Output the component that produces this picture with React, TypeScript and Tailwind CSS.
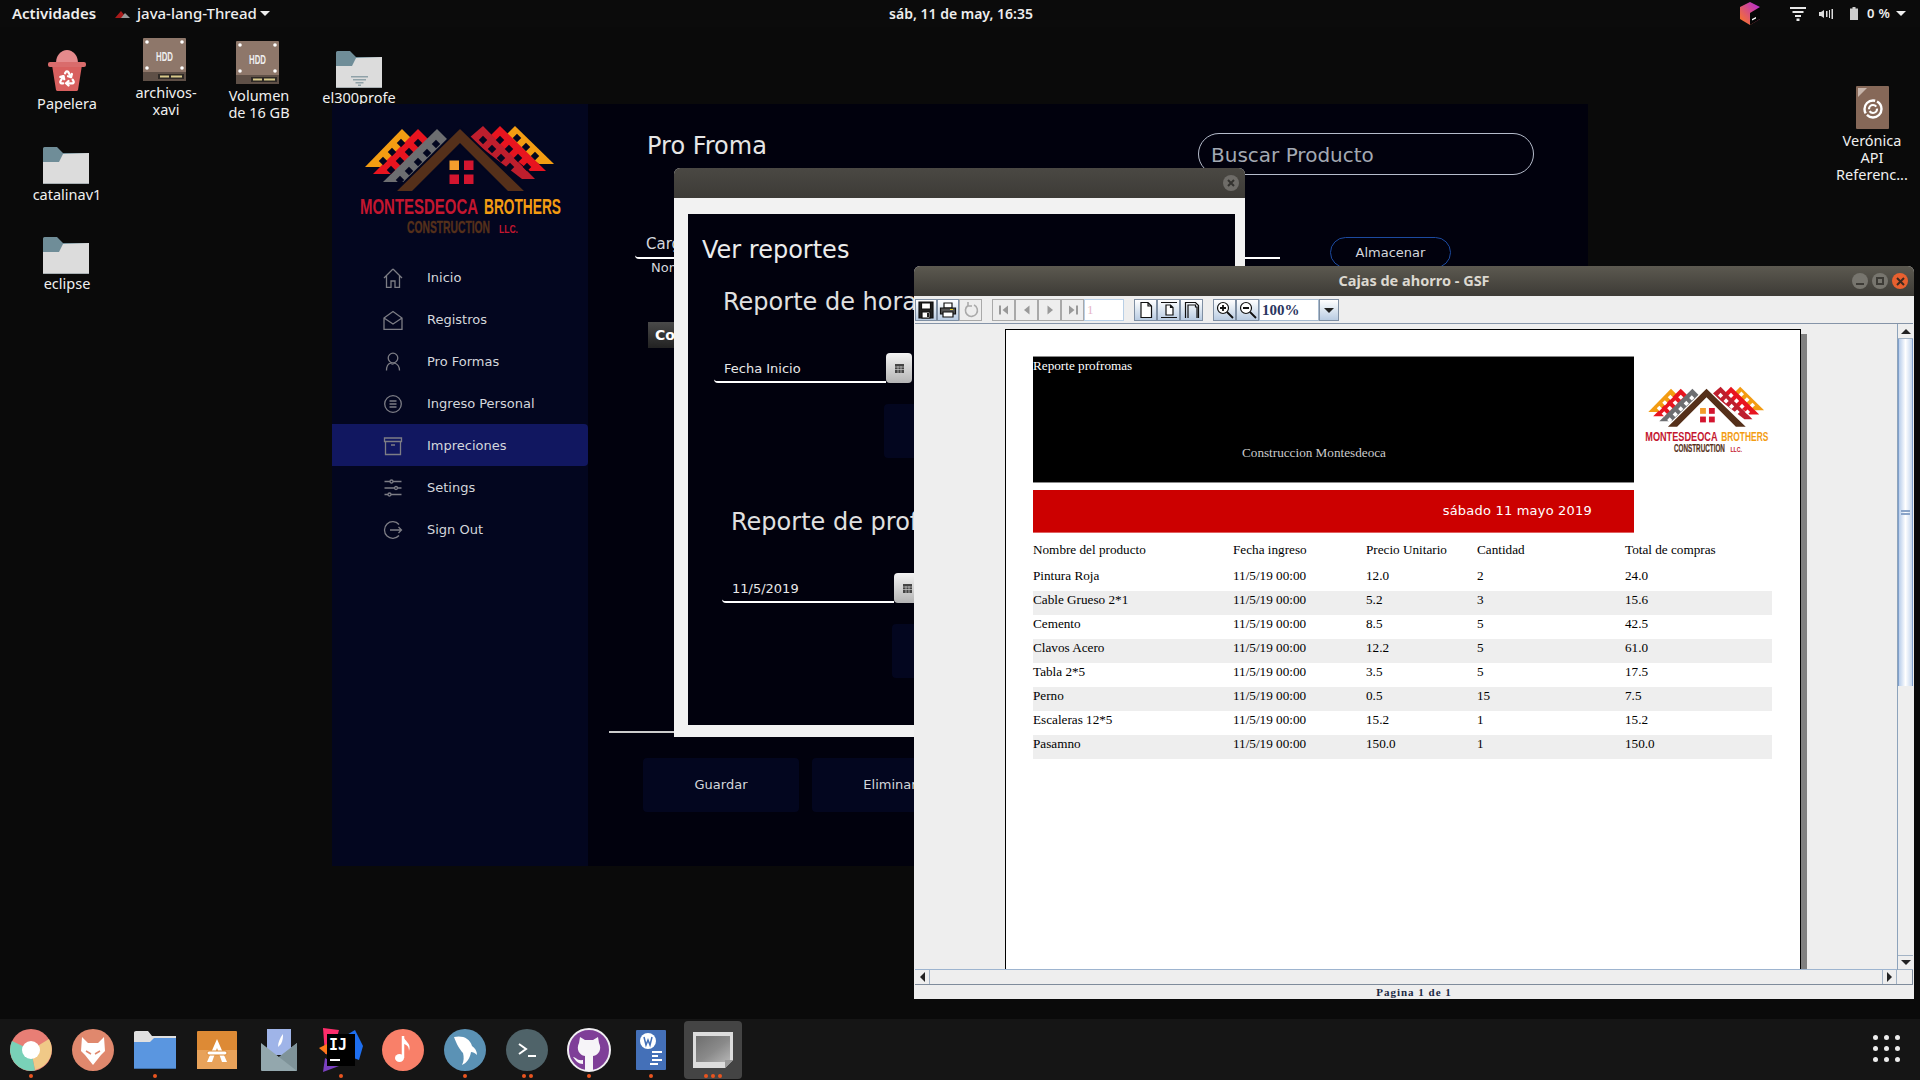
import type { ReactNode } from "react";
import { Recycle } from "lucide-react";

const menuItems = [
  { label: "Inicio", icon: "home" },
  { label: "Registros", icon: "mail" },
  { label: "Pro Formas", icon: "user" },
  { label: "Ingreso Personal", icon: "list" },
  { label: "Impreciones", icon: "archive" },
  { label: "Setings", icon: "sliders" },
  { label: "Sign Out", icon: "logout" },
];

const rows = [
  ["Pintura Roja", "11/5/19 00:00", "12.0", "2", "24.0"],
  ["Cable Grueso 2*1", "11/5/19 00:00", "5.2", "3", "15.6"],
  ["Cemento", "11/5/19 00:00", "8.5", "5", "42.5"],
  ["Clavos Acero", "11/5/19 00:00", "12.2", "5", "61.0"],
  ["Tabla 2*5", "11/5/19 00:00", "3.5", "5", "17.5"],
  ["Perno", "11/5/19 00:00", "0.5", "15", "7.5"],
  ["Escaleras 12*5", "11/5/19 00:00", "15.2", "1", "15.2"],
  ["Pasamno", "11/5/19 00:00", "150.0", "1", "150.0"],
];

function MenuIcon({ name }: { name: string }) {
  return (
    <svg width="20" height="20" viewBox="0 0 20 20" fill="none" stroke="#7d7d85" strokeWidth="1.3">
      {name === "home" && <path d="M10 1 1 10M10 1l9 9M3.5 8v11.5H8V13h4v6.5h4.500V8" />}
      {name === "mail" && <path d="M1 8l9-6.500L19 8v11.500H1zM1 8l9 6 9-6" />}
      {name === "user" && (
        <>
          <circle cx="10" cy="6" r="4.800" />
          <path d="M3.500 18.500c0-5 2.500-7 4-7.500 1 1.500 3 1.500 4 0 1.500.5 5 2.500 5 7.500" />
        </>
      )}
      {name === "list" && (
        <>
          <circle cx="10" cy="10" r="8.300" />
          <path d="M6.500 7h7M6.500 10h7M6.500 13h7" />
        </>
      )}
      {name === "archive" && <path d="M1.500 2h17v3.500h-17zM2.500 5.500h15v13h-15zM8 9h4" />}
      {name === "sliders" && (
        <>
          <path d="M1.500 3.500h17M1.500 10h17M1.500 16.500h17" />
          <circle cx="8.500" cy="3.500" r="1.500" fill="#03061f" />
          <circle cx="13" cy="10" r="1.500" fill="#03061f" />
          <circle cx="6.500" cy="16.500" r="1.500" fill="#03061f" />
        </>
      )}
      {name === "logout" && <path d="M16 4.500A8.300 8.300 0 1 0 16 15.500M7 10h11.500M15.500 7l3 3-3 3" />}
    </svg>
  );
}

function RoofLogo({ hole, small }: { hole: string; small?: boolean }) {
  const holes = [
    [61, 23], [52, 32], [43, 41],
    [78, 23], [69, 32], [60, 41], [51, 50],
    [96, 24], [87, 33], [78, 42], [69, 51], [60, 60],
    [143, 20], [152, 29], [161, 38], [170, 47], [145, 36], [154, 45], [163, 54],
    [160, 20], [169, 29], [178, 38], [187, 47],
    [177, 18], [186, 27], [195, 36],
  ];
  return (
    <svg
      width={small ? 147 : 240}
      height={small ? 80 : 130}
      viewBox="0 0 240 130"
      className="shrink-0"
    >
      <path d="M25 47 62 9l12 12-24 26z" fill="#f39c12" />
      <path d="M33 54 78 9l12 12-33 33z" fill="#e8141f" />
      <path d="M43 62 97 9l13 13-40 40z" fill="#6d6e71" />
      <path d="M214 44 175 6l-12 12 36 26z" fill="#f39c12" />
      <path d="M206 51 160 6l-12 12 42 33z" fill="#e8141f" />
      <path d="M195 59 143 6l-14 12 53 41z" fill="#be1e2d" />
      {holes.map(([x, y]) => (
        <rect
          key={`${x}-${y}`}
          x={x - 3}
          y={y - 3}
          width="6"
          height="6"
          fill={hole}
          transform={`rotate(45 ${x} ${y})`}
        />
      ))}
      <path d="M120 9 57 71h15l48-48 48 48h16z" fill={hole} stroke={hole} strokeWidth="4" />
      <path d="M120 9 57 71h15l48-48 48 48h16z" fill="#55301a" />
      <rect x="109.500" y="40.500" width="9.500" height="9.500" fill="#f39c2c" />
      <rect x="124" y="40.500" width="9.500" height="9.500" fill="#d3152f" />
      <rect x="109.500" y="54.500" width="9.500" height="9.500" fill="#d3152f" />
      <rect x="124" y="54.500" width="9.500" height="9.500" fill="#d3152f" />
      <g fontFamily="'Liberation Sans Narrow','Liberation Sans',sans-serif" fontWeight="700">
        <text x="20" y="94" fontSize="22" fill="#c4162f" textLength="118" lengthAdjust="spacingAndGlyphs">
          MONTESDEOCA
        </text>
        <text x="144" y="94" fontSize="22" fill="#f39c12" textLength="77" lengthAdjust="spacingAndGlyphs">
          BROTHERS
        </text>
        <text
          x="67"
          y="113"
          fontSize="17"
          fill="#55301a"
          stroke="#55301a"
          strokeWidth=".4"
          textLength="83"
          lengthAdjust="spacingAndGlyphs"
        >
          CONSTRUCTION
        </text>
        <text x="159" y="113" fontSize="11" fill="#c4162f" textLength="19" lengthAdjust="spacingAndGlyphs">
          LLC.
        </text>
      </g>
    </svg>
  );
}

function Folder({ filter }: { filter?: boolean }) {
  return (
    <svg width="46" height="37" viewBox="0 0 46 37">
      <path d="M0 1.500Q0 0 1.500 0H14l6 6h26v31H0z" fill="#6f8d98" />
      <path d="M0 15h16l4-8 26-1v31H0z" fill="#dcdcdc" />
      <path d="M0 36h46v1H0z" fill="#a9b0b3" />
      {filter && <path d="M15 25h17v1.500H15zM17 28h13v1.500H17zM19.500 31h8v1.500h-8zM22 33.500h3V35h-3z" fill="#8fa1a8" />}
    </svg>
  );
}

function Hdd() {
  return (
    <svg className="-ml-[3px]" width="43" height="43" viewBox="0 0 43 43">
      <rect width="43" height="43" rx="1" fill="#8e776a" />
      <rect y="34" width="43" height="9" fill="#5f5047" />
      <g fill="#fff">
        <circle cx="4" cy="4" r="1.800" />
        <circle cx="39" cy="4" r="1.800" />
        <circle cx="4" cy="30" r="1.800" />
        <circle cx="39" cy="30" r="1.800" />
      </g>
      <text
        x="13"
        y="23"
        fontSize="12.500"
        fontWeight="700"
        fill="#eee"
        textLength="17"
        lengthAdjust="spacingAndGlyphs"
        fontFamily="'Liberation Sans Narrow','Liberation Sans',sans-serif"
      >
        HDD
      </text>
      <rect x="15" y="36" width="26" height="5" fill="#2f2a26" />
      <path d="M17 37.500h9v2h-9zM28 37.500h11v2H28z" fill="#d8c98a" />
    </svg>
  );
}

function Trash() {
  return (
    <svg className="ml-[2px]" width="38" height="41" viewBox="0 0 38 41">
      <path d="M8 13a11 13 0 0 1 22 0z" fill="#e58a8c" />
      <path d="M4 15h30l-4 25a2 2 0 0 1-2 1H10a2 2 0 0 1-2-1z" fill="#d8605f" />
      <rect x="0" y="12" width="38" height="5" rx="2" fill="#d96c6c" />
      <Recycle x="10" y="19" width="18" height="18" color="#fff" strokeWidth="3" />
    </svg>
  );
}

function DocIcon() {
  return (
    <svg width="33" height="43" viewBox="0 0 33 43">
      <rect width="33" height="43" rx="1" fill="#866858" />
      <path d="M2 2h9L2 11z" fill="#c7b5ab" />
      <g fill="none" stroke="#fff">
        <circle cx="17" cy="23" r="8.500" strokeWidth="2.400" strokeDasharray="20 2 20 2" />
        <circle cx="17" cy="23" r="4" strokeWidth="2.200" strokeDasharray="10 2" />
      </g>
    </svg>
  );
}

function DesktopIcon({
  className,
  lines,
  labelGap = "mt-[3px]",
  children,
}: {
  className: string;
  lines: string[];
  labelGap?: string;
  children: ReactNode;
}) {
  return (
    <div className={`absolute flex w-[100px] flex-col items-center ${className}`}>
      {children}
      <div className={`${labelGap} text-center text-[14.500px] leading-[17px] text-[#f0f0f0]`}>
        {lines.map((line) => (
          <div key={line}>{line}</div>
        ))}
      </div>
    </div>
  );
}

function TopBar() {
  return (
    <div className="relative z-10 flex h-[27px] shrink-0 items-center bg-[#0b0b0b] pl-3 font-['Noto_Sans',sans-serif] text-[15px] font-medium text-[#eeeeee]">
      <span className="w-[103px] font-semibold">Actividades</span>
      <svg width="16" height="8" viewBox="0 0 16 8">
        <path d="M0 8 6 1l4 5-2 2z" fill="#a81a1a" />
        <path d="M6 8l4-5 5 5z" fill="#999" />
      </svg>
      <span className="ml-1.5 w-[123px] whitespace-nowrap">java-lang-Thread</span>
      <span className="h-0 w-0 border-x-[5px] border-t-[5px] border-x-transparent border-t-[#eeeeee]" />
      <span className="ml-[618px] w-[146px] text-center text-[14px] font-semibold whitespace-nowrap">
        sáb, 11 de may, 16:35
      </span>
      <svg className="ml-[706px]" width="20" height="23" viewBox="0 0 20 23">
        <defs>
          <linearGradient id="box" x1="0" y1="1" x2="1" y2="0">
            <stop offset="0" stopColor="#ff7a1a" />
            <stop offset="1" stopColor="#b026e0" />
          </linearGradient>
        </defs>
        <path d="M10 0l10 5v12l-10 6L0 17V5z" fill="url(#box)" />
        <path d="M10 11l10-6v12l-10 6z" fill="#050505" />
        <path d="M12 17l4-2v1.500l-4 2z" fill="#fff" />
      </svg>
      <svg className="ml-[30px]" width="16" height="14" viewBox="0 0 16 14" fill="#e8e8e8">
        <path d="M0 0h16v2H0zM2.500 4h11v2h-11zM5 8h6v2H5zM6.500 11.500h3V14h-3z" />
      </svg>
      <svg className="ml-[13px]" width="14" height="10" viewBox="0 0 14 10" fill="#dddddd">
        <path d="M0 3h2l3-2v8L2 7H0zM7 2h1.500v6H7zM10 1h1v8h-1zM12.500 0H14v10h-1.500z" />
      </svg>
      <svg className="ml-[17px]" width="8" height="13" viewBox="0 0 8 13" fill="#cccccc">
        <path d="M2.500 0h3v1.500H8V13H0V1.500h2.500z" />
      </svg>
      <span className="ml-[9px] w-[29px] text-[13px] font-semibold tracking-wide whitespace-nowrap">0 %</span>
      <span className="h-0 w-0 border-x-[5px] border-t-[5px] border-x-transparent border-t-[#eeeeee]" />
    </div>
  );
}

function Sidebar() {
  return (
    <div className="flex w-[256px] shrink-0 flex-col bg-[#03061f] font-['DejaVu_Sans',sans-serif]">
      <div className="ml-2 mt-4 mb-1.5">
        <RoofLogo hole="#03061f" />
      </div>
      {menuItems.map((item) => (
        <div
          key={item.label}
          className={`flex h-[42px] items-center rounded-r-sm pt-0.5 pl-[51px] text-[13px] text-[#d4d6dc] ${
            item.label === "Impreciones" ? "bg-[#111760]" : ""
          }`}
        >
          <MenuIcon name={item.icon} />
          <span className="ml-[24px]">{item.label}</span>
        </div>
      ))}
    </div>
  );
}

function MainPane() {
  return (
    <div className="flex min-w-0 flex-1 flex-col bg-[#01010d] font-['DejaVu_Sans',sans-serif] text-[#d4d6dc]">
      <div className="mt-[29px] flex h-[42px] items-center justify-between pl-[59px] pr-[54px]">
        <span className="mb-4 text-[24px] text-[#e6e6e6]">Pro Froma</span>
        <div className="flex h-[42px] w-[336px] items-center rounded-full border-[1.5px] border-[#b5bccb] pt-px pl-[12px] text-[20px] text-[#a3a9b3]">
          Buscar Producto
        </div>
      </div>
      <div className="mt-[54px] ml-[47px] flex h-[30px] items-start">
        <div className="h-[30px] w-[645px] rounded-bl-sm border-b-2 border-white pl-[11px] text-[15px] leading-[30px]">
          Cargo
        </div>
        <div className="mt-2 ml-[50px] flex h-[31px] w-[121px] items-center justify-center rounded-full border border-[#1c4aa0] text-[13px]">
          Almacenar
        </div>
      </div>
      <div className="mt-px ml-[63px] text-[13px] leading-4">Nombre</div>
      <div className="mt-[46px] ml-[60px] mr-[40px] h-[26px] bg-gradient-to-b from-[#4a4a4a] to-[#222222] pl-[7px] text-[14px] leading-[26px] font-bold text-white">
        Codigo
      </div>
      <div className="mt-[383px] ml-[21px] mr-[40px] h-0.5 bg-[#cccccc]" />
      <div className="mt-[25px] ml-[55px] flex gap-[13px] text-[13px]">
        <div className="flex h-[54px] w-[156px] items-center justify-center rounded-sm bg-[#03061f]">Guardar</div>
        <div className="flex h-[54px] w-[156px] items-center justify-center rounded-sm bg-[#03061f]">Eliminar</div>
      </div>
    </div>
  );
}

function DateField({ value, className }: { value: string; className: string }) {
  return (
    <div className={`flex h-[30px] ${className}`}>
      <div className="h-[30px] w-[172px] rounded-bl-sm border-b-2 border-white pl-[10px] text-[13px] leading-[31px] text-[#e8e8e8]">
        {value}
      </div>
      <div className="flex h-[30px] w-[26px] items-center justify-center rounded-sm bg-gradient-to-b from-[#f4f4f4] to-[#b4b4b4]">
        <svg width="9" height="9" viewBox="0 0 9 9">
          <rect width="9" height="9" fill="#444" />
          <path d="M0 3h9M0 5.500h9M3 2v7M6 2v7" stroke="#ccc" strokeWidth=".7" />
        </svg>
      </div>
    </div>
  );
}

function ReportsDialog() {
  return (
    <div className="absolute left-[674px] top-[141px] flex h-[569px] w-[571px] flex-col overflow-hidden rounded-t-md bg-[#f2f2f2] font-['DejaVu_Sans',sans-serif]">
      <div className="flex h-[30px] shrink-0 items-center justify-end bg-gradient-to-b from-[#4a4843] to-[#3d3b37] pr-[6px]">
        <svg width="16" height="16" viewBox="0 0 16 16">
          <circle cx="8" cy="8" r="8" fill="#6e6c68" />
          <path d="M5 5l6 6M11 5l-6 6" stroke="#33322f" strokeWidth="2" />
        </svg>
      </div>
      <div className="mt-4 mr-[10px] mb-3 ml-[14px] flex-1 bg-[#01010d]">
        <div className="mt-[19px] ml-[14px] text-[24px] leading-[34px] text-[#ececec]">Ver reportes</div>
        <div className="mt-[17px] ml-[35px] text-[24px] leading-9 whitespace-nowrap text-[#e0e0e0]">
          Reporte de horas
        </div>
        <DateField value="Fecha Inicio" className="mt-[33px] ml-[26px]" />
        <div className="mt-[21px] ml-[196px] h-[54px] w-[156px] rounded-sm bg-[#03061f]" />
        <div className="mt-[46px] ml-[43px] text-[24px] leading-9 whitespace-nowrap text-[#e0e0e0]">
          Reporte de proformas
        </div>
        <DateField value="11/5/2019" className="mt-[33px] ml-[34px]" />
        <div className="mt-[21px] ml-[204px] h-[54px] w-[156px] rounded-sm bg-[#03061f]" />
      </div>
    </div>
  );
}

function ToolButton({
  children,
  disabled,
  width = "w-[23px]",
}: {
  children: ReactNode;
  disabled?: boolean;
  width?: string;
}) {
  return (
    <div
      className={`flex h-[22px] shrink-0 items-center justify-center border ${width} ${
        disabled
          ? "border-[#a9a9a9] bg-[#eeeeee]"
          : "border-[#7f8fa3] bg-gradient-to-b from-white to-[#b9cce2]"
      }`}
    >
      <svg width="18" height="18" viewBox="0 0 18 18" fill="none" stroke="#111" strokeWidth="1.200">
        {children}
      </svg>
    </div>
  );
}

function Toolbar() {
  return (
    <div className="flex h-[28px] shrink-0 border-b border-[#8594a8] bg-[#eeeeee] pt-[3px]">
      <ToolButton width="w-[22px]">
        <path d="M2 1h14v16H2z" fill="#222" />
        <path d="M4.500 2h9v6h-9z" fill="#fff" />
        <path d="M5 11h8v6H5z" fill="#fff" />
        <path d="M10 12h2v4h-2z" fill="#222" stroke="none" />
      </ToolButton>
      <ToolButton width="w-[22px]">
        <path d="M5 2h8v5H5z" fill="#fff" />
        <path d="M1.500 7h15v6h-15z" fill="#555" />
        <path d="M4 11h10v5H4z" fill="#fff" />
        <path d="M11 8.500h3" stroke="#e8d020" />
      </ToolButton>
      <ToolButton disabled>
        <path d="M6 4.500A6 6 0 1 0 12 4M6 1v4h4" stroke="#aaaaaa" strokeWidth="1.600" />
      </ToolButton>
      <div className="w-[10px] shrink-0" />
      <ToolButton disabled>
        <path d="M5 4.500v9" stroke="#999" strokeWidth="2" />
        <path d="M13 4.500v9L7.500 9z" fill="#999" stroke="none" />
      </ToolButton>
      <ToolButton disabled>
        <path d="M11.500 4.500v9L6 9z" fill="#999" stroke="none" />
      </ToolButton>
      <ToolButton disabled>
        <path d="M6.500 4.500v9L12 9z" fill="#999" stroke="none" />
      </ToolButton>
      <ToolButton disabled>
        <path d="M13 4.500v9" stroke="#999" strokeWidth="2" />
        <path d="M5 4.500v9L10.500 9z" fill="#999" stroke="none" />
      </ToolButton>
      <div className="h-[22px] w-[40px] shrink-0 border border-[#b8cfe6] bg-white pl-0.5 font-['Liberation_Serif',serif] text-[13px] leading-5 text-[#e6b6c8]">
        1
      </div>
      <div className="w-[10px] shrink-0" />
      <ToolButton>
        <path d="M4 1.500h7l3.500 3.500v11.500H4zM11 1.500V5h3.500" fill="#fff" />
      </ToolButton>
      <ToolButton>
        <path d="M6 4h4.500L13 6.500V14H6zM10.500 4v2.500H13M1 1.500h16M1 16.500h16" fill="#fff" />
      </ToolButton>
      <ToolButton>
        <path d="M2.500 17V1.500h10l3 3V17M5 17V4h7.500v2h1.500v11" />
      </ToolButton>
      <div className="w-[10px] shrink-0" />
      <ToolButton>
        <circle cx="7" cy="7" r="5.500" fill="#fff" />
        <path d="M4 7h6M7 4v6M11 11l6 6" strokeWidth="1.800" />
      </ToolButton>
      <ToolButton>
        <circle cx="7" cy="7" r="5.500" fill="#fff" />
        <path d="M4 7h6M11 11l6 6" strokeWidth="1.800" />
      </ToolButton>
      <div className="h-[22px] w-[60px] shrink-0 border border-[#a9bcd0] bg-white pl-0.5 font-['Liberation_Serif',serif] text-[15px] leading-5 font-bold text-[#2a3560]">
        100%
      </div>
      <div className="flex h-[22px] w-[20px] shrink-0 items-center justify-center border border-[#7f8fa3] bg-gradient-to-b from-white to-[#b9cce2]">
        <span className="h-0 w-0 border-x-[5px] border-t-[5px] border-x-transparent border-t-[#222222]" />
      </div>
    </div>
  );
}

function ReportPage() {
  return (
    <div className="mt-[5px] ml-[90px] h-[720px] w-[796px] border border-black bg-white pt-[26px] pl-[27px] shadow-[6px_5px_0_#808080] font-['Liberation_Serif',serif] text-[13.200px] leading-[18px] text-black">
      <div className="flex h-[127px]">
        <div className="h-[127px] w-[601px] border-y border-[#888888] bg-black text-white">
          <div>Reporte profromas</div>
          <div className="mt-[69px] ml-[209px] text-[#cccccc]">Construccion Montesdeoca</div>
        </div>
        <div className="mt-[27px] -ml-px">
          <RoofLogo hole="#ffffff" small />
        </div>
      </div>
      <div className="mt-[7px] flex h-[43px] w-[601px] items-center justify-end border-b border-[#e06060] bg-[#cc0000] pr-[42px] font-['DejaVu_Sans',sans-serif] text-[13px] tracking-[.2px] text-white">
        sábado 11 mayo 2019
      </div>
      <div className="mt-2 grid h-[26px] w-[739px] grid-cols-[200px_133px_111px_148px_147px]">
        <div>Nombre del producto</div>
        <div>Fecha ingreso</div>
        <div>Precio Unitario</div>
        <div>Cantidad</div>
        <div>Total de compras</div>
      </div>
      {rows.map((row, index) => (
        <div
          key={row[0]}
          className={`grid h-[24px] w-[739px] grid-cols-[200px_133px_111px_148px_147px] ${
            index % 2 === 1 ? "bg-[#eeeeee]" : ""
          }`}
        >
          {row.map((cell, cellIndex) => (
            <div key={cellIndex}>{cell}</div>
          ))}
        </div>
      ))}
    </div>
  );
}

function ReportWindow() {
  return (
    <div className="absolute left-[914px] top-[239px] flex h-[733px] w-[1000px] flex-col overflow-hidden rounded-t-md bg-[#eeeeee] px-px">
      <div className="-mx-px flex h-[30px] shrink-0 items-center justify-center bg-gradient-to-b from-[#5c5950] to-[#3d3b36] font-['Noto_Sans',sans-serif] text-[14.500px] font-bold text-[#dcd8d0]">
        <span>Cajas de ahorro - GSF</span>
        <div className="absolute right-[6px] flex gap-1">
          <div className="flex h-4 w-4 items-center justify-center rounded-full bg-[#77756e]">
            <span className="mt-1.5 h-0.5 w-2 bg-[#3d3b36]" />
          </div>
          <div className="flex h-4 w-4 items-center justify-center rounded-full bg-[#77756e]">
            <span className="h-2 w-2 border-2 border-[#3d3b36]" />
          </div>
          <div className="flex h-4 w-4 items-center justify-center rounded-full bg-[#e8602f]">
            <svg width="9" height="9" viewBox="0 0 9 9">
              <path d="M1 1l7 7M8 1 1 8" stroke="#3d2a20" strokeWidth="2" />
            </svg>
          </div>
        </div>
      </div>
      <Toolbar />
      <div className="flex h-[646px] shrink-0">
        <div className="min-w-0 flex-1 overflow-hidden border-b border-[#9db4cf]">
          <ReportPage />
        </div>
        <div className="flex w-[16px] shrink-0 flex-col border-l border-[#8da3bb] bg-[#eeeeee]">
          <div className="flex h-[15px] items-center justify-center border-b border-[#a3b3c5]">
            <span className="h-0 w-0 border-x-[5px] border-b-[5px] border-x-transparent border-b-[#222222]" />
          </div>
          <div className="flex h-[347px] items-center justify-center border-x border-[#7f9fca] bg-gradient-to-r from-[#b8cdea] via-white to-[#c5d6ee]">
            <div className="h-[5px] w-[9px] border-y-2 border-[#8aa4c8]" />
          </div>
          <div className="flex-1" />
          <div className="flex h-[15px] items-center justify-center border-y border-[#a3b3c5]">
            <span className="h-0 w-0 border-x-[5px] border-t-[5px] border-x-transparent border-t-[#222222]" />
          </div>
        </div>
      </div>
      <div className="flex h-[15px] shrink-0 border-b border-[#7f8c9c] bg-[#eeeeee]">
        <div className="flex w-[15px] items-center justify-center border-r border-[#a3b3c5]">
          <span className="h-0 w-0 border-y-[5px] border-r-[5px] border-y-transparent border-r-[#222222]" />
        </div>
        <div className="flex-1" />
        <div className="flex w-[15px] items-center justify-center border-x border-[#a3b3c5]">
          <span className="h-0 w-0 border-y-[5px] border-l-[5px] border-y-transparent border-l-[#222222]" />
        </div>
        <div className="w-[16px] border-r border-[#7f8c9c]" />
      </div>
      <div className="flex-1 text-center font-['Liberation_Serif',serif] text-[11px] leading-[15px] font-bold tracking-[1px] text-[#1c2a44]">
        Pagina 1 de 1
      </div>
    </div>
  );
}

function DockSlot({ dots, active, children }: { dots: number; active?: boolean; children: ReactNode }) {
  return (
    <div
      className={`relative flex h-[58px] w-[58px] shrink-0 items-center justify-center rounded-sm ${
        active ? "bg-[#444444]" : ""
      }`}
    >
      {children}
      <div className="absolute bottom-px flex gap-[3px]">
        {Array.from({ length: dots }).map((_, i) => (
          <span key={i} className="h-1 w-1 rounded-full bg-[#e9541f]" />
        ))}
      </div>
    </div>
  );
}

function Dock() {
  return (
    <div className="flex h-[61px] shrink-0 items-start gap-1 bg-[#151515] pt-0.5 pl-[2px]">
      <DockSlot dots={1}>
        <svg width="42" height="42" viewBox="0 0 42 42">
          <circle cx="21" cy="21" r="21" fill="#e87e75" />
          <path d="M21 21 39 10a21 21 0 0 1-14 31z" fill="#f0c987" />
          <path d="M21 21 25 41.500A21 21 0 0 1 2 12z" fill="#79d1b8" />
          <circle cx="21" cy="21" r="9" fill="#fff" />
        </svg>
      </DockSlot>
      <DockSlot dots={0}>
        <svg width="42" height="42" viewBox="0 0 42 42">
          <circle cx="21" cy="21" r="21" fill="#e0886d" />
          <path d="M10 8l6 6h10l6-6 1 14-4 4-8 10-8-10-4-4z" fill="#fff" />
          <path d="M14 22l5 3M28 22l-5 3" stroke="#e0886d" strokeWidth="1.500" />
        </svg>
      </DockSlot>
      <DockSlot dots={1}>
        <svg width="42" height="38" viewBox="0 0 42 38">
          <path d="M0 1.500Q0 0 2 0h12l4 5h24v33H0z" fill="#e0e0e0" />
          <path d="M0 11h16l4-4 22 0v31H0z" fill="#5a96e0" />
          <path d="M0 37h42v1H0z" fill="#3f6fa8" />
        </svg>
      </DockSlot>
      <DockSlot dots={0}>
        <svg width="40" height="38" viewBox="0 0 40 38">
          <rect width="40" height="38" y="0" rx="1" fill="#dd8a35" />
          <rect y="19" width="40" height="19" fill="#e8a25a" />
          <path d="M20 8 30 31h-5l-5-14-5 14h-5z" fill="#fff" />
          <rect x="10" y="20" width="20" height="4" rx="2" fill="#fff" stroke="#dd8a35" />
        </svg>
      </DockSlot>
      <DockSlot dots={0}>
        <svg width="36" height="42" viewBox="0 0 36 42">
          <rect x="6" y="0" width="24" height="26" fill="#9fb4e8" />
          <path d="M22 5c-3 4-5 8-5 13l3-3c2-4 2-7 2-10z" fill="#fff" />
          <path d="M0 14l18 14 18-14v27a1 1 0 0 1-1 1H1a1 1 0 0 1-1-1z" fill="#93a7ad" />
          <path d="M18 28l18-14v28z" fill="#7f9399" />
        </svg>
      </DockSlot>
      <DockSlot dots={1}>
        <svg width="44" height="44" viewBox="0 0 44 44">
          <path d="M4 0l16 2-6 22-8 2z" fill="#ff2d6b" />
          <path d="M26 8l10-6 8 16-4 14-16-6z" fill="#1e6ff0" />
          <path d="M0 20l8-4 4 14z" fill="#ff7a1a" />
          <path d="M4 44l2-14 14 8z" fill="#7a40c0" />
          <rect x="8" y="6" width="28" height="32" fill="#000" />
          <text
            x="10"
            y="22"
            fontSize="15"
            fontWeight="700"
            fill="#fff"
            fontFamily="'DejaVu Sans Mono','Liberation Mono',monospace"
          >
            IJ
          </text>
          <rect x="11" y="31" width="10" height="2" fill="#fff" />
        </svg>
      </DockSlot>
      <DockSlot dots={0}>
        <svg width="42" height="42" viewBox="0 0 42 42">
          <circle cx="21" cy="21" r="21" fill="#f98069" />
          <path d="M21 7v22" stroke="#fff" strokeWidth="2.500" />
          <path d="M21 7c1 5 9 7 6 15 0-5-3-7-6-7z" fill="#fff" />
          <ellipse cx="17.500" cy="29" rx="4.500" ry="4" fill="#fff" />
        </svg>
      </DockSlot>
      <DockSlot dots={1}>
        <svg width="42" height="42" viewBox="0 0 42 42">
          <circle cx="21" cy="21" r="21" fill="#5b92b5" />
          <path d="M10 8c8-2 16 1 18 9 3 2 5 5 5 9-2-2-4-3-6-3-1 6-4 11-9 13 2-4 2-8 1-12-3-3-7-10-9-16z" fill="#fff" />
        </svg>
      </DockSlot>
      <DockSlot dots={2}>
        <svg width="42" height="42" viewBox="0 0 42 42">
          <circle cx="21" cy="21" r="21" fill="#4f6369" />
          <path d="M13 15l7 5-7 5" fill="none" stroke="#fff" strokeWidth="2" />
          <path d="M22 27h8" stroke="#fff" strokeWidth="2" />
        </svg>
      </DockSlot>
      <DockSlot dots={1}>
        <svg width="44" height="44" viewBox="0 0 44 44">
          <circle cx="22" cy="22" r="21" fill="#7f3f98" stroke="#f0eef2" strokeWidth="2" />
          <path d="M13 9l5 3h8l5-3 1 6c3 6 0 12-6 13v15h-8V28c-6-1-9-7-6-13z" fill="#f6f4f8" />
          <path d="M6 29c3 0 4 4 10 3v4c-5 0-7-3-10-7z" fill="#f6f4f8" />
        </svg>
      </DockSlot>
      <DockSlot dots={1}>
        <svg width="30" height="40" viewBox="0 0 30 40">
          <rect width="30" height="40" rx="1" fill="#4470b8" />
          <circle cx="12" cy="11" r="8" fill="#fff" />
          <path d="M8 7l2 8 2-5 2 5 2-8" fill="none" stroke="#4470b8" strokeWidth="1.500" />
          <path d="M16 22h10M16 26h6M16 30h10M14 34h8" stroke="#fff" strokeWidth="1.800" />
        </svg>
      </DockSlot>
      <DockSlot dots={3} active>
        <svg width="42" height="38" viewBox="0 0 42 38">
          <defs>
            <linearGradient id="shot" x1="0" y1="0" x2="1" y2="1">
              <stop offset="0" stopColor="#6e6e6e" />
              <stop offset=".55" stopColor="#8a8a8a" />
              <stop offset="1" stopColor="#b5b5b5" />
            </linearGradient>
          </defs>
          <path d="M1 1h40v28l-8 8H1z" fill="#ddd" />
          <rect x="4" y="5" width="34" height="26" fill="url(#shot)" />
          <path d="M33 37v-8h8z" fill="#999" />
        </svg>
      </DockSlot>
      <div className="ml-auto mt-[14px] mr-5 grid grid-cols-3 gap-[6px]">
        {Array.from({ length: 9 }).map((_, i) => (
          <span key={i} className="h-[5px] w-[5px] rounded-full bg-[#eeeeee]" />
        ))}
      </div>
    </div>
  );
}

export default function App() {
  return (
    <div className="flex h-screen w-screen flex-col overflow-hidden bg-[#0a0a0a]">
      <TopBar />
      <div className="relative flex-1 font-['Noto_Sans',sans-serif]">
        <DesktopIcon className="left-[16px] top-[23px]" lines={["Papelera"]} labelGap="mt-1 ml-[2px]">
          <Trash />
        </DesktopIcon>
        <DesktopIcon className="left-[116px] top-[11px]" lines={["archivos-", "xavi"]}>
          <Hdd />
        </DesktopIcon>
        <DesktopIcon className="left-[209px] top-[14px]" lines={["Volumen", "de 16 GB"]}>
          <Hdd />
        </DesktopIcon>
        <DesktopIcon className="left-[309px] top-[24px]" lines={["el300profe"]} labelGap="mt-px">
          <Folder filter />
        </DesktopIcon>
        <DesktopIcon className="left-[16px] top-[120px]" lines={["catalinav1"]} labelGap="mt-[2px] ml-[2px]">
          <Folder />
        </DesktopIcon>
        <DesktopIcon className="left-[16px] top-[210px]" lines={["eclipse"]} labelGap="mt-px ml-[2px]">
          <Folder />
        </DesktopIcon>
        <DesktopIcon className="left-[1822px] top-[59px]" lines={["Verónica", "API", "Referenc..."]}>
          <DocIcon />
        </DesktopIcon>

        <div className="absolute left-[332px] top-[77px] flex h-[762px] w-[1256px]">
          <Sidebar />
          <MainPane />
        </div>
        <ReportsDialog />
        <ReportWindow />
      </div>
      <Dock />
    </div>
  );
}
